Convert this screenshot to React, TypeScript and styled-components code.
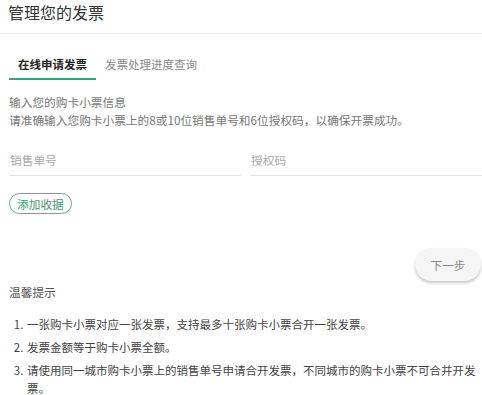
import React, { useState } from "react";
import styled, { createGlobalStyle } from "styled-components";

const GlobalStyle = createGlobalStyle`
  html, body {
    margin: 0;
    padding: 0;
    background: #fff;
    font-family: "Noto Sans CJK SC", "Noto Sans", "Liberation Sans", sans-serif;
    color: #333;
  }
  * {
    box-sizing: border-box;
  }
`;

const Page = styled.div`
  width: 482px;
  overflow: hidden;
`;

const Header = styled.div`
  height: 34px;
  padding: 0 8px;
  border-bottom: 1px solid #ebebeb;
  display: flex;
  align-items: flex-start;
`;

const Title = styled.h1`
  margin: 1px 0 0;
  font-size: 16px;
  line-height: 22px;
  font-weight: 400;
  color: #333;
`;

const Body = styled.div`
  padding-left: 9px;
`;

const Tabs = styled.div`
  display: flex;
  margin-top: 16px;
`;

const Tab = styled.button<{ active: boolean }>`
  border: none;
  background: none;
  font-family: inherit;
  font-size: 11.5px;
  line-height: 16px;
  padding: 6px 9px 6px;
  cursor: pointer;
  color: ${({ active }) => (active ? "#222" : "#888")};
  font-weight: ${({ active }) => (active ? 700 : 400)};
  border-bottom: 2px solid ${({ active }) => (active ? "#3f9c7b" : "transparent")};
`;

const Info = styled.div`
  margin-top: 13px;
  font-size: 11.7px;
  line-height: 18px;
  color: #777;
`;

const Fields = styled.div`
  display: grid;
  grid-template-columns: 1fr 1fr;
  gap: 9px;
  margin-top: 20px;
`;

const Field = styled.input`
  border: none;
  border-bottom: 1px solid #e3e3e3;
  outline: none;
  font-family: inherit;
  font-size: 11.7px;
  line-height: 20px;
  height: 27px;
  padding: 0 0 6px 1px;
  color: #333;
  background: transparent;

  &::placeholder {
    color: #aaa;
  }
`;

const AddButton = styled.button`
  margin-top: 17px;
  height: 21px;
  padding: 0 7px;
  border: 1px solid #5aae8f;
  border-radius: 11px;
  background: #fff;
  color: #3f9a6e;
  font-family: inherit;
  font-size: 11.7px;
  line-height: 19px;
  cursor: pointer;
`;

const NextRow = styled.div`
  display: flex;
  justify-content: flex-end;
  margin-top: 34px;
  padding-right: 1px;
`;

const NextButton = styled.button`
  width: 66px;
  height: 33px;
  border: none;
  border-radius: 17px;
  background: #f5f5f5;
  color: #888;
  font-family: inherit;
  font-size: 11.7px;
  box-shadow: 0 2px 3px rgba(0, 0, 0, 0.22);
  cursor: pointer;
`;

const TipTitle = styled.div`
  margin-top: 2px;
  font-size: 11.7px;
  line-height: 18px;
  color: #555;
`;

const TipList = styled.ol`
  margin: 14px 0 0;
  padding-left: 17px;
  font-size: 11.5px;
  line-height: 18px;
  color: #444;
`;

const TipItem = styled.li`
  margin-bottom: 5px;
  padding-left: 1px;
`;

const tips = [
  "一张购卡小票对应一张发票，支持最多十张购卡小票合开一张发票。",
  "发票金额等于购卡小票全额。",
  "请使用同一城市购卡小票上的销售单号申请合开发票，不同城市的购卡小票不可合并开发票。",
];

export default function App() {
  const [tab, setTab] = useState(0);

  return (
    <Page>
      <GlobalStyle />
      <Header>
        <Title>管理您的发票</Title>
      </Header>
      <Body>
        <Tabs>
          <Tab active={tab === 0} onClick={() => setTab(0)}>
            在线申请发票
          </Tab>
          <Tab active={tab === 1} onClick={() => setTab(1)}>
            发票处理进度查询
          </Tab>
        </Tabs>

        <Info>
          输入您的购卡小票信息
          <br />
          请准确输入您购卡小票上的8或10位销售单号和6位授权码，以确保开票成功。
        </Info>

        <Fields>
          <Field placeholder="销售单号" />
          <Field placeholder="授权码" />
        </Fields>

        <AddButton>添加收据</AddButton>

        <NextRow>
          <NextButton>下一步</NextButton>
        </NextRow>

        <TipTitle>温馨提示</TipTitle>
        <TipList>
          {tips.map((t) => (
            <TipItem key={t}>{t}</TipItem>
          ))}
        </TipList>
      </Body>
    </Page>
  );
}
